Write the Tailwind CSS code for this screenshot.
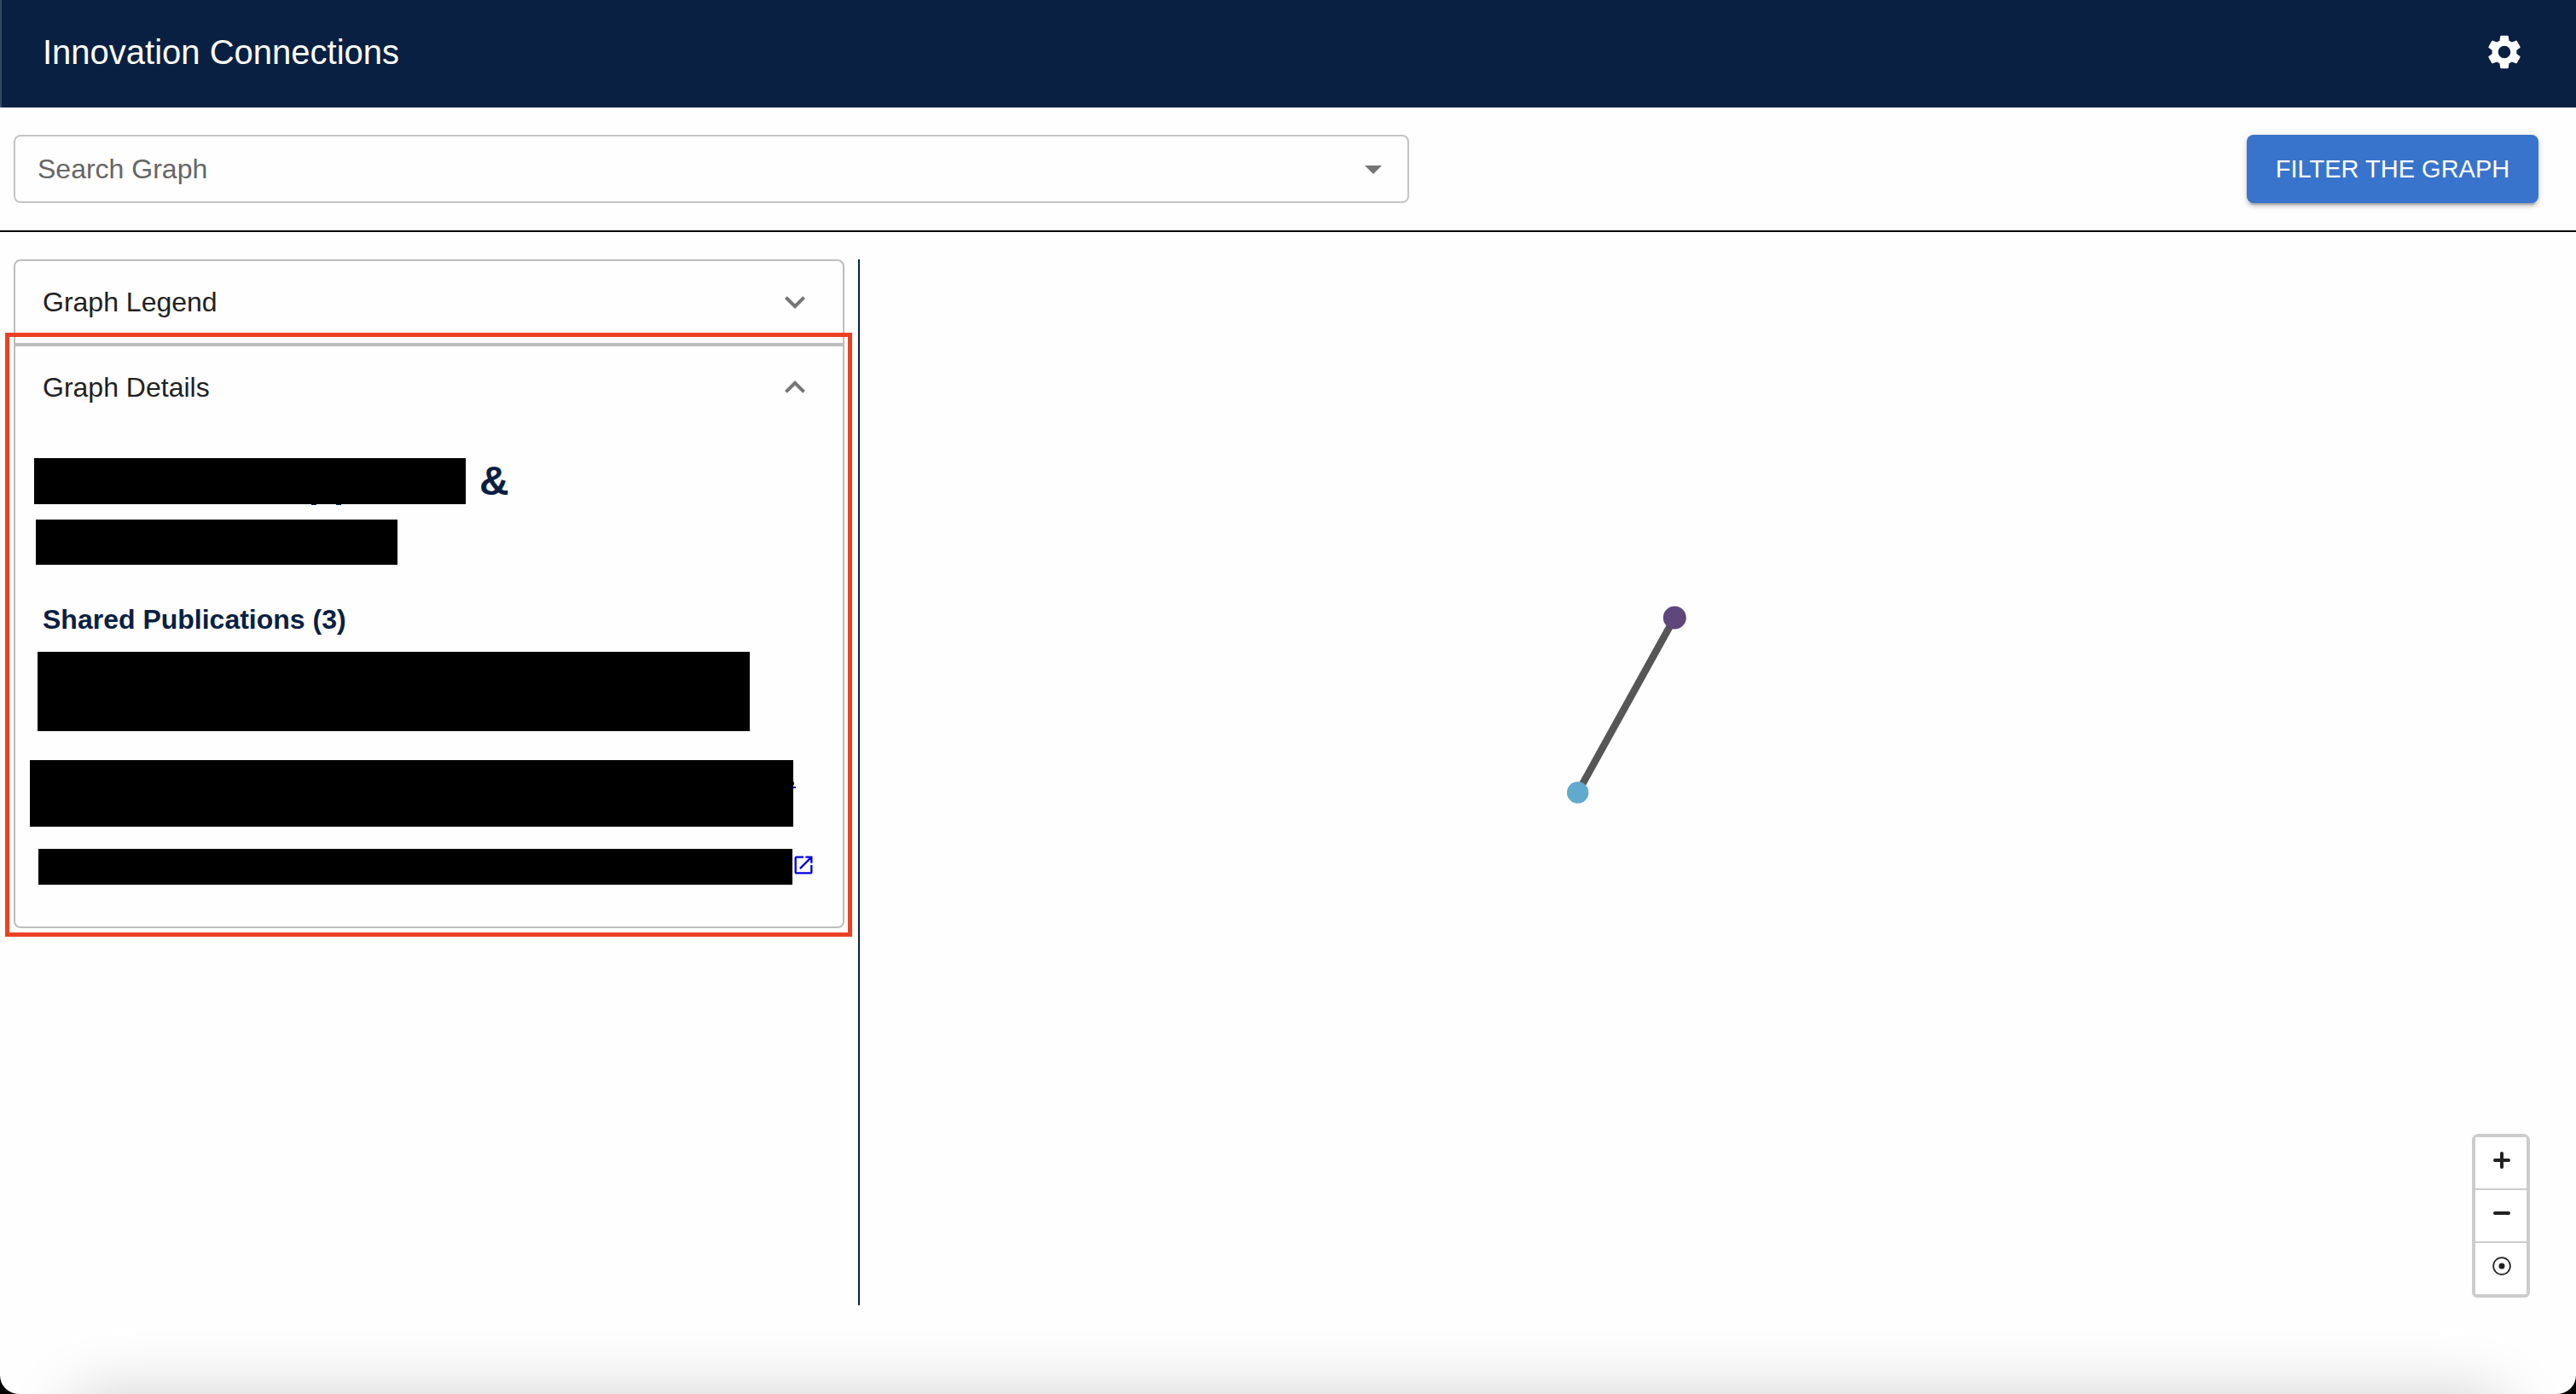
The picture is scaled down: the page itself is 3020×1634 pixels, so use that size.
<!DOCTYPE html>
<html lang="en">
<head>
<meta charset="utf-8">
<title>Innovation Connections</title>
<script src="https://cdn.jsdelivr.net/npm/@tailwindcss/browser@4"></script>
</head>
<body class="bg-black font-['Helvetica','Liberation_Sans',Arial,sans-serif] text-[#212121]">
<div class="relative flex min-h-screen flex-col overflow-hidden rounded-b-[22px] bg-[#fefefe]">
  <header class="flex h-[126px] items-center justify-between border-l-2 border-[#364965] bg-[#0a2042] pr-[60px] pb-1 pl-12 text-white">
    <h1 class="text-[40px] leading-[60px]">Innovation Connections</h1>
    <button type="button" aria-label="Settings">
      <svg class="size-12" viewBox="0 0 24 24" fill="currentColor"><path d="M19.14 12.94c.04-.3.06-.61.06-.94 0-.32-.02-.64-.07-.94l2.03-1.58c.18-.14.23-.41.12-.61l-1.92-3.32c-.12-.22-.37-.29-.59-.22l-2.39.96c-.5-.38-1.03-.7-1.62-.94l-.36-2.54c-.04-.24-.24-.41-.48-.41h-3.84c-.24 0-.43.17-.47.41l-.36 2.54c-.59.24-1.13.57-1.62.94l-2.39-.96c-.22-.08-.47 0-.59.22L2.74 8.87c-.12.21-.08.47.12.61l2.03 1.58c-.05.3-.09.63-.09.94s.02.64.07.94l-2.03 1.58c-.18.14-.23.41-.12.61l1.92 3.32c.12.22.37.29.59.22l2.39-.96c.5.38 1.03.7 1.62.94l.36 2.54c.05.24.24.41.48.41h3.84c.24 0 .44-.17.47-.41l.36-2.54c.59-.24 1.13-.56 1.62-.94l2.39.96c.22.08.47 0 .59-.22l1.92-3.32c.12-.22.07-.47-.12-.61zM12 15.6c-1.98 0-3.6-1.62-3.6-3.6s1.62-3.6 3.6-3.6 3.6 1.62 3.6 3.6-1.62 3.6-3.6 3.6"/></svg>
    </button>
  </header>

  <div class="flex items-center justify-between border-b-2 border-black py-8 pr-11 pl-4">
    <div class="flex h-20 w-[1636px] items-center rounded-lg border-2 border-[#c4c4c4] pr-4 pl-[26px]">
      <input type="text" aria-label="Search Graph" placeholder="Search Graph" class="min-w-0 flex-1 bg-transparent text-[32px] leading-[46px] outline-none placeholder:text-[#666666]">
      <button type="button" aria-label="Open">
        <svg class="size-12 text-[#757575]" viewBox="0 0 24 24" fill="currentColor"><path d="m7 10 5 5 5-5z"/></svg>
      </button>
    </div>
    <button type="button" class="h-20 w-[342px] rounded-lg bg-[#3874cb] text-[29px] leading-[48px] text-white shadow-[0_6px_2px_-4px_rgba(0,0,0,0.2),0_4px_4px_0_rgba(0,0,0,0.14),0_2px_10px_0_rgba(0,0,0,0.12)]">FILTER THE GRAPH</button>
  </div>

  <main class="mt-8 flex h-[1226px]">
    <aside class="w-[1008px] shrink-0 border-r-2 border-[#0a2042] pr-4 pl-4">
      <section class="rounded-t-lg border-2 border-[#bdbdbd]">
        <h2>
          <button type="button" aria-expanded="false" class="flex h-24 w-full items-center justify-between px-8 text-[32px] leading-[48px]">
            Graph Legend
            <svg class="size-12 text-[#757575]" viewBox="0 0 24 24" fill="currentColor"><path d="M16.59 8.59 12 13.17 7.41 8.59 6 10l6 6 6-6z"/></svg>
          </button>
        </h2>
      </section>
      <section class="relative h-[684px] rounded-b-lg border-2 border-[#bdbdbd]">
        <h2>
          <button type="button" aria-expanded="true" class="flex h-24 w-full items-center justify-between px-8 text-[32px] leading-[48px]">
            Graph Details
            <svg class="size-12 text-[#757575]" viewBox="0 0 24 24" fill="currentColor"><path d="m12 8-6 6 1.41 1.41L12 10.83l4.59 4.58L18 14z"/></svg>
          </button>
        </h2>
        <div class="pt-[26px] text-[#0a2042]">
          <h3 class="text-[48px] leading-[72px] font-bold">
            <span class="flex items-center">
              <svg class="mt-px ml-[22px] h-[55px] w-[506px]" viewBox="0 0 506 55" aria-hidden="true"><path fill="#000" d="M0 0h506v54H0z"/><path fill="#0a2042" d="M325 54h6v1h-6zM354 54h6v1h-6z"/></svg>
              <span class="ml-4">&amp;</span>
            </span>
            <span class="mt-[9px] ml-6 block h-[53px] w-[424px] bg-black"></span>
          </h3>
          <h4 class="mt-10 pl-8 text-[32px] leading-[48px] font-bold">Shared Publications (3)</h4>
          <ul class="mt-[14px]">
            <li><span class="ml-[26px] block h-[93px] w-[835px] bg-black"></span></li>
            <li class="mt-[34px] flex">
              <span class="ml-[17px] h-[78px] w-[895px] bg-black"></span>
              <svg class="mt-[25px] h-2 w-[3px] text-[#0000ee]" viewBox="0 0 3 8" fill="currentColor" aria-hidden="true"><path d="M0 0l1 1v3H0zM0 6h3v2H0z"/></svg>
            </li>
            <li class="mt-[26px] flex">
              <span class="ml-[27px] h-[42px] w-[884px] bg-black"></span>
              <a href="#" aria-label="Open publication" class="mt-[5px] -ml-px text-[#0000ee]">
                <svg class="size-7" viewBox="0 0 24 24" fill="currentColor"><path d="M19 19H5V5h7V3H5c-1.110 0-2 .9-2 2v14c0 1.100.89 2 2 2h14c1.100 0 2-.9 2-2v-7h-2zM14 3v2h3.590l-9.830 9.830 1.410 1.410L19 6.410V10h2V3z"/></svg>
              </a>
            </li>
          </ul>
        </div>
        <div class="pointer-events-none absolute -top-4 -right-[11px] -bottom-3 -left-3 border-[5px] border-[#eb4025]"></div>
      </section>
    </aside>

    <div class="relative flex flex-1 items-end justify-end pr-[54px] pb-[9px]">
      <svg class="absolute top-[402px] left-[828px] h-[240px] w-[144px]" viewBox="1836 706 144 240" role="img" aria-label="Two connected people">
        <path d="M1963.300 724 1849.700 929" stroke="#565656" stroke-width="8.500"/>
        <circle cx="1963.300" cy="724" r="13.500" fill="#5e477d"/>
        <circle cx="1849.700" cy="929" r="12.700" fill="#60aacd"/>
      </svg>
      <div class="w-[68px] rounded-t-lg rounded-b-md bg-[#cccccc] p-1 text-[#212121]">
        <div class="flex flex-col gap-0.5">
          <button type="button" aria-label="Zoom in" class="flex h-[60px] items-center justify-center bg-white pb-1.5">
            <svg class="ml-0.5 size-5" viewBox="0 0 20 20" stroke="currentColor" stroke-width="4" stroke-linecap="round"><path d="M2 10h16M10 2v16"/></svg>
          </button>
          <button type="button" aria-label="Zoom out" class="flex h-[60px] items-center justify-center bg-white pb-1.5">
            <svg class="ml-0.5 size-5" viewBox="0 0 20 20" stroke="currentColor" stroke-width="4" stroke-linecap="round"><path d="M2 10h16"/></svg>
          </button>
          <button type="button" aria-label="Recenter" class="flex h-[60px] items-center justify-center bg-white pb-1.5">
            <svg class="ml-0.5 size-[22px]" viewBox="0 0 22 22"><circle cx="11" cy="11" r="9.900" fill="none" stroke="currentColor" stroke-width="1.700"/><circle cx="11" cy="11" r="3.500" fill="currentColor"/></svg>
          </button>
        </div>
      </div>
    </div>
  </main>

  <div class="pointer-events-none absolute right-20 -bottom-32 left-20 h-32 rounded-[40px] shadow-[0_0_76px_0_rgba(0,0,0,0.18)]"></div>
</div>
</body>
</html>
